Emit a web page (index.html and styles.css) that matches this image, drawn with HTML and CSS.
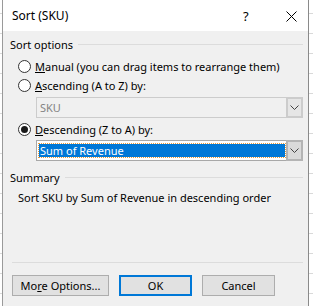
FILE: index.html
```html
<!DOCTYPE html>
<html lang="en">
<head>
  <meta charset="UTF-8" />
  <meta name="viewport" content="width=device-width, initial-scale=1.0" />
  <title>Sort (SKU)</title>
  <link rel="stylesheet" href="styles.css">
</head>
<body>
  <div class="dialog">
    <div class="titlebar">
      <span class="title">Sort (SKU)</span>
      <span class="help">?</span>
      <span class="close">
        <svg width="11" height="11" viewBox="0 0 11 11">
          <path d="M0.5 0.5 L10.5 10.5 M10.5 0.5 L0.5 10.5" stroke="#000" stroke-width="1" fill="none" />
        </svg>
      </span>
    </div>

    <div class="content">
      <div class="group-label">
        <span>Sort options</span>
        <span class="rule"></span>
      </div>

      <div class="option first">
        <span class="radio"></span>
        <span><u>M</u>anual (you can drag items to rearrange them)</span>
      </div>

      <div class="option">
        <span class="radio"></span>
        <span><u>A</u>scending (A to Z) by:</span>
      </div>
      <div class="select disabled">
        <span class="value">SKU</span>
        <span class="arrow">
          <svg width="9" height="5" viewBox="0 0 9 5"><path d="M0.5 0.5 L4.5 4.5 L8.5 0.5" stroke="#444" fill="none" /></svg>
        </span>
      </div>

      <div class="option">
        <span class="radio checked"></span>
        <span><u>D</u>escending (Z to A) by:</span>
      </div>
      <div class="select active">
        <span class="value"><span class="highlight">Sum of Revenue</span></span>
        <span class="arrow">
          <svg width="9" height="5" viewBox="0 0 9 5"><path d="M0.5 0.5 L4.5 4.5 L8.5 0.5" stroke="#444" fill="none" /></svg>
        </span>
      </div>

      <div class="group-label summary-label">
        <span>Summary</span>
        <span class="rule"></span>
      </div>
      <div class="summary">Sort SKU by Sum of Revenue in descending order</div>

      <div class="footer">
        <div class="buttons">
          <button class="more">Mo<u>r</u>e Options...</button>
          <button class="ok">OK</button>
          <button class="cancel">Cancel</button>
        </div>
      </div>
    </div>
  </div>
</body>
</html>
```

FILE: styles.css
```css
body {
  margin: 0;
  height: 306px;
  overflow: hidden;
  font-family: "Segoe UI", "Noto Sans", sans-serif;
  font-size: 11px;
  color: #000;
  background-color: #fff;
  background-image: repeating-linear-gradient(to bottom, transparent 0, transparent 13px, #d9d9d9 13px, #d9d9d9 14px, transparent 14px, transparent 20px);
}

.dialog {
  margin-left: 2px;
  width: 305px;
  height: 306px;
  border-left: 1px solid #9a9a9a;
  border-right: 1px solid #8a8a8a;
  background-color: #f0f0f0;
  display: flex;
  flex-direction: column;
}

.titlebar {
  height: 31px;
  background-color: #fff;
  display: flex;
  align-items: center;
  padding-left: 9px;
}

.title {
  flex: 1;
  font-size: 12px;
}

.help {
  width: 43px;
  font-size: 13px;
}

.close {
  width: 22px;
  display: flex;
  padding-top: 1px;
}

.content {
  padding: 6px 5px 0 7px;
  display: flex;
  flex-direction: column;
  flex: 1;
}

.group-label {
  display: flex;
  align-items: center;
  height: 14px;
  gap: 5px;
}

.rule {
  flex: 1;
  border-top: 1px solid #dcdcdc;
  margin-top: 1px;
}

.option {
  display: flex;
  align-items: center;
  height: 16px;
  margin-top: 3px;
  padding-left: 8px;
  gap: 4px;
}

.option.first {
  margin-top: 7px;
}

.radio {
  width: 11px;
  height: 11px;
  border: 1px solid #333;
  border-radius: 50%;
  background-color: #fff;
  display: flex;
  align-items: center;
  justify-content: center;
}

.radio.checked::after {
  content: "";
  width: 7px;
  height: 7px;
  border-radius: 50%;
  background-color: #1a1a1a;
}

.select {
  display: flex;
  height: 21px;
  margin-left: 26px;
  margin-top: 4px;
  border: 1px solid #adadad;
  box-sizing: border-box;
}

.select .value {
  flex: 1;
  display: flex;
  align-items: center;
  padding-left: 3px;
}

.select.disabled {
  background-color: #f0f0f0;
  border-color: #cccccc;
}

.select.disabled .value {
  color: #838383;
}

.select.active {
  background-color: #fff;
  border-color: #a8a8a8;
  margin-top: 3px;
}

.select.active .value {
  padding: 3px 1px 3px 2px;
}

.highlight {
  flex: 1;
  height: 100%;
  display: flex;
  align-items: center;
  padding-left: 1px;
  box-sizing: border-box;
  background-color: #0078d7;
  color: #fff;
  outline: 1px dotted #e89c3c;
}

.arrow {
  width: 17px;
  margin: -1px -1px -1px 0;
  border: 2px solid #b4b4b4;
  background-color: #dadada;
  display: flex;
  align-items: center;
  justify-content: center;
  box-sizing: border-box;
}

.disabled .arrow {
  border-color: #cccccc;
  background-color: #e6e6e6;
}

.summary-label {
  margin-top: 9px;
}

.summary {
  margin-top: 5px;
  height: 16px;
  padding-left: 8px;
  display: flex;
  align-items: center;
}

.footer {
  margin-top: 57px;
  border-top: 1px solid #dcdcdc;
  margin-left: 2px;
}

.buttons {
  display: flex;
  gap: 10px;
  margin-top: 12px;
}

button {
  height: 21px;
  font-family: inherit;
  font-size: 11px;
  background-color: #e1e1e1;
  border: 1px solid #adadad;
  padding: 0;
  color: #000;
}

.more {
  width: 97px;
}

.ok {
  width: 73px;
  border: 2px solid #0078d7;
}

.cancel {
  width: 73px;
}
```
